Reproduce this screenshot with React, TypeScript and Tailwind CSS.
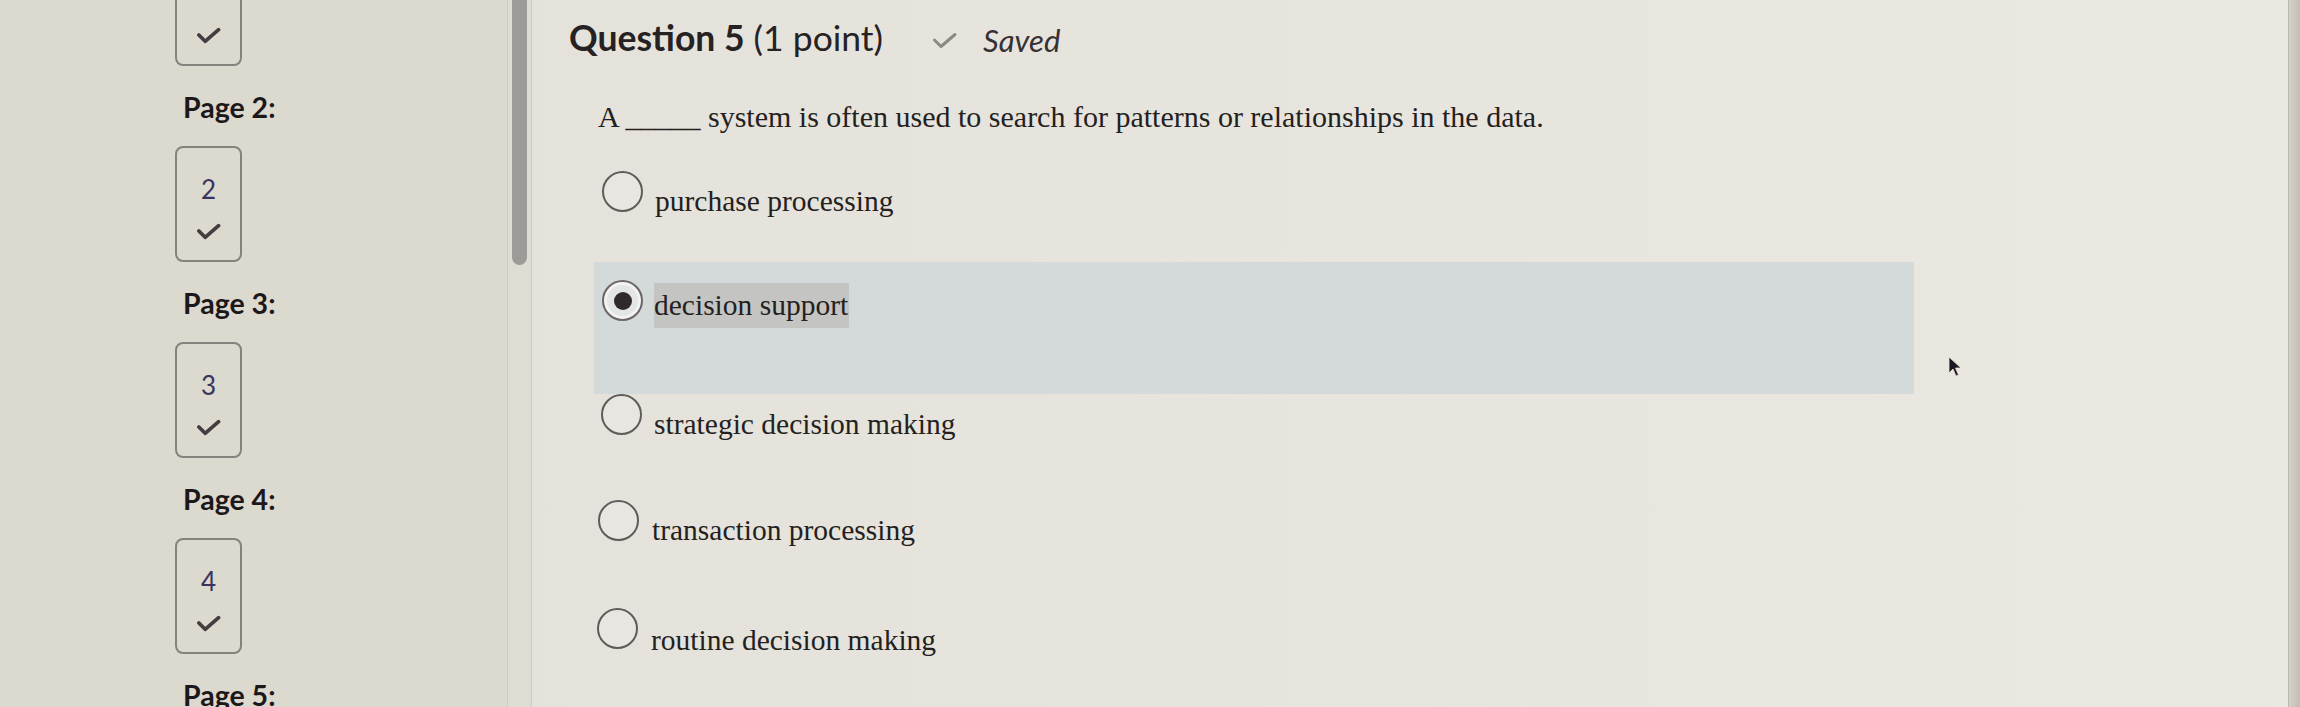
import React from "react";

const Check = ({ className, w = 3 }: { className?: string; w?: number }) => (
  <svg viewBox="0 0 26 17" className={className} fill="none">
    <path
      d="M3 8 L9.5 14.5 L23.5 2.5"
      stroke="currentColor"
      strokeWidth={w}
      strokeLinecap="round"
      strokeLinejoin="round"
    />
  </svg>
);

const Tile = ({ n, className }: { n?: number; className?: string }) => (
  <div
    className={`w-[67px] h-[116px] shrink-0 rounded-[8px] border-2 border-[#85837e] flex flex-col items-center ${className ?? ""}`}
  >
    <span className="mt-[24px] h-[34px] leading-[34px] text-[26px] text-[#37345f] font-['Lato',sans-serif]">
      {n}
    </span>
    <Check w={3.8} className="mt-[17px] w-[25px] h-[17px] text-[#433d3f]" />
  </div>
);

const Label = ({ children }: { children: React.ReactNode }) => (
  <div className="mt-[26px] h-[30px] leading-[30px] pl-[8px] text-[28.5px] font-bold text-[#1c1819] font-['Lato',sans-serif] whitespace-nowrap">
    {children}
  </div>
);

const Radio = ({ selected }: { selected?: boolean }) =>
  selected ? (
    <div className="w-[41px] h-[41px] shrink-0 rounded-full border-2 border-[#6a6767] bg-[#e4e6e5] shadow-[inset_0_0_0_3px_#f3f3f1] flex items-center justify-center">
      <div className="w-[18px] h-[18px] rounded-full bg-[#2f292b]" />
    </div>
  ) : (
    <div className="w-[41px] h-[41px] shrink-0 rounded-full border-[2.5px] border-[#5f5b5b] bg-[#e8e6e0]" />
  );

export default function App() {
  const serif = "font-['Liberation_Serif',serif] text-[29.5px] text-[#241f21]";
  return (
    <div className="relative flex w-[2300px] h-[707px] overflow-hidden bg-[#e6e4dd]">
      {/* Sidebar */}
      <div className="w-[507px] shrink-0 bg-[#dcd9cf] flex flex-col pl-[175px]">
        <Tile className="-mt-[50px]" />
        <Label>Page 2:</Label>
        <Tile n={2} className="mt-[24px]" />
        <Label>Page 3:</Label>
        <Tile n={3} className="mt-[24px]" />
        <Label>Page 4:</Label>
        <Tile n={4} className="mt-[24px]" />
        <Label>Page 5:</Label>
      </div>

      {/* Scroll track */}
      <div className="w-[25px] shrink-0 bg-[#dfdcd4] border-l border-r border-[#cfccc4] flex justify-center">
        <div className="w-[15px] h-[265px] rounded-b-full bg-[#9d9b97]" />
      </div>

      {/* Main */}
      <div className="flex-1 bg-gradient-to-r from-[#e4e2da] to-[#ebe8e1] pl-[37px] pt-[16px]">
        <div className="flex items-center h-[44px] font-['Lato',sans-serif]">
          <h1 className="text-[35.5px] leading-[44px] text-[#262223] whitespace-nowrap">
            <span className="font-bold">Question 5</span> (1 point)
          </h1>
          <Check className="ml-[48px] mt-[4px] w-[27px] h-[17px] text-[#8b8986]" />
          <span className="ml-[25px] mt-[4px] italic text-[31px] text-[#363133]">Saved</span>
        </div>

        <p className="mt-[39px] ml-[29px] leading-[36px] whitespace-nowrap font-['Liberation_Serif',serif] text-[30px] text-[#241f21]">
          A _____ system is often used to search for patterns or relationships in the data.
        </p>

        <div className="ml-[25px] mt-[36px] w-[1320px] flex flex-col">
          <div className="flex items-start pl-[8px]">
            <Radio />
            <span className={`ml-[12px] mt-[10px] leading-[41px] whitespace-nowrap ${serif}`}>
              purchase processing
            </span>
          </div>

          <div className="mt-[40px] h-[132px] bg-[#d4d9da] flex items-start pl-[8px] pt-[18px]">
            <Radio selected />
            <span className={`ml-[11px] mt-[3px] leading-[45px] bg-[#c4c5c2] pr-[1px] whitespace-nowrap ${serif}`}>
              decision support
            </span>
          </div>

          <div className="mt-[0px] flex items-start pl-[7px]">
            <Radio />
            <span className={`ml-[12px] mt-[10px] leading-[41px] whitespace-nowrap ${serif}`}>
              strategic decision making
            </span>
          </div>

          <div className="mt-[55px] flex items-start pl-[4px]">
            <Radio />
            <span className={`ml-[13px] mt-[10px] leading-[41px] whitespace-nowrap ${serif}`}>
              transaction processing
            </span>
          </div>

          <div className="mt-[57px] flex items-start pl-[3px]">
            <Radio />
            <span className={`ml-[13px] mt-[12px] leading-[41px] whitespace-nowrap ${serif}`}>
              routine decision making
            </span>
          </div>
        </div>
      </div>

      {/* Right edge */}
      <div className="w-[12px] shrink-0 bg-gradient-to-r from-[#d4d0c8] to-[#c2beb6] border-l border-[#bcb8b0]" />

      {/* Mouse cursor */}
      <svg
        viewBox="0 0 14 22"
        className="absolute left-[1948px] top-[356px] w-[14px] h-[22px]"
      >
        <path d="M1 1 L1 17 L5 13 L8 20 L10.5 19 L7.5 12 L13 12 Z" fill="#1d1720" stroke="#e8e4dc" strokeWidth="0.8" />
      </svg>
    </div>
  );
}
